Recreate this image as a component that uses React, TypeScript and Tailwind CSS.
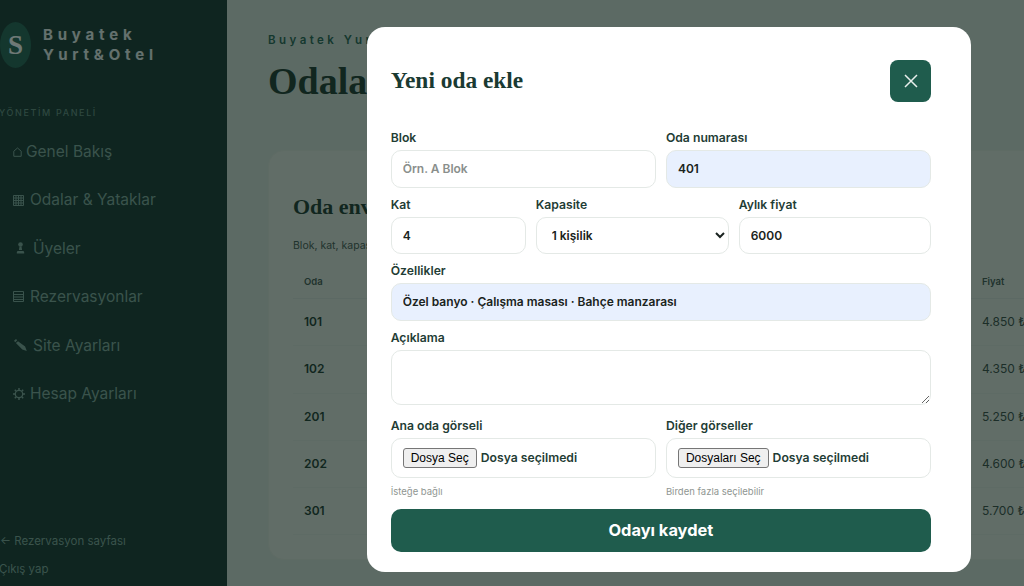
import type { ReactNode } from "react";

const sans = "font-['Inter','Noto_Sans',sans-serif]";
const serif = "font-['Liberation_Serif','DejaVu_Serif',serif]";

const navItems: { icon: ReactNode; slot: string; label: string }[] = [
  {
    slot: "w-[13px]",
    label: "Genel Bakış",
    icon: (
      <svg width="9" height="10" viewBox="0 0 9 10" fill="none" stroke="currentColor" strokeWidth="1">
        <path d="M.8 9.3V4.2L4.5 1l3.7 3.2v5.1z" />
      </svg>
    ),
  },
  {
    slot: "w-[17px]",
    label: "Odalar & Yataklar",
    icon: (
      <svg width="11" height="11" viewBox="0 0 11 11" fill="none" stroke="currentColor" strokeWidth="1">
        <path d="M.5.5h10v10H.5zM3 .5v10M5.500 .5v10M8 .5v10M.5 3h10M.5 5.500h10M.5 8h10" />
      </svg>
    ),
  },
  {
    slot: "w-[20px]",
    label: "Üyeler",
    icon: (
      <svg className="ml-[3px]" width="9" height="12" viewBox="0 0 9 12" fill="currentColor">
        <circle cx="4.500" cy="2.500" r="2.300" />
        <path d="M3.500 4.500h2l.6 3.500H2.900zM1.500 9h6l.7 1.200v1.300H.8v-1.300z" />
      </svg>
    ),
  },
  {
    slot: "w-[17px]",
    label: "Rezervasyonlar",
    icon: (
      <svg width="11" height="11" viewBox="0 0 11 11" fill="none" stroke="currentColor" strokeWidth="1">
        <path d="M.5.5h10v10H.5zM.5 3.500h10M.5 6h10M.5 8.500h10" />
      </svg>
    ),
  },
  {
    slot: "w-[20px]",
    label: "Site Ayarları",
    icon: (
      <svg className="ml-px" width="13" height="12" viewBox="0 0 13 12" fill="currentColor">
        <path d="M2 0L0 1.800l1.200 1.400 2-1.900zM4 2.200L1.900 4.100l6.400 6.300 4.500 1.500-1.700-4.400z" />
      </svg>
    ),
  },
  {
    slot: "w-[17px]",
    label: "Hesap Ayarları",
    icon: (
      <svg width="12" height="12" viewBox="0 0 12 12" fill="none" stroke="currentColor">
        <circle cx="6" cy="6" r="3.700" strokeWidth="1.300" />
        <path strokeWidth="1.500" d="M6 0v2M6 10v2M0 6h2M10 6h2M1.800 1.800l1.400 1.400M8.800 8.800l1.400 1.400M10.200 1.800L8.800 3.200M3.200 8.800l-1.400 1.400" />
      </svg>
    ),
  },
];

const rooms = [
  { no: "101", price: "4.850 ₺" },
  { no: "102", price: "4.350 ₺" },
  { no: "201", price: "5.250 ₺" },
  { no: "202", price: "4.600 ₺" },
  { no: "301", price: "5.700 ₺" },
];

const labelClass = "mb-1 block text-[12.2px] leading-[17px] font-semibold text-[#1f3d35]";
const fieldClass =
  "block h-[37.6px] w-full rounded-[10px] border border-[#e4e9e6] px-[11px] text-[12px] font-semibold text-[#1a2320] outline-none placeholder:text-[#8a8f8c]";

function Sidebar() {
  return (
    <aside className="flex h-full w-[227px] shrink-0 flex-col overflow-hidden bg-[#122d28] pb-[8px] pt-[22px]">
      <div className="flex items-center gap-3">
        <div className={`${serif} flex h-[46px] w-[31px] items-center justify-center rounded-[50%] bg-[#1e5a4b] text-[27px] font-bold text-white`}>
          S
        </div>
        <div className="text-[15px] leading-[20px] font-bold tracking-[0.32em] text-white/90">
          <div>Buyatek</div>
          <div>Yurt&amp;Otel</div>
        </div>
      </div>

      <p className="-ml-px mt-[39px] whitespace-nowrap text-[9px] leading-[12px] font-medium tracking-[0.18em] text-[#5f8478]">
        YÖNETİM PANELİ
      </p>

      <nav className="mt-[8.5px]">
        {navItems.map((item) => (
          <div key={item.label} className="flex h-[48.4px] items-center pl-[13px] text-[15.5px] text-[#7da096]">
            <span className={item.slot}>{item.icon}</span>
            <span>{item.label}</span>
          </div>
        ))}
      </nav>

      <div className="mt-auto space-y-[11px] text-[11.5px] leading-[17px] text-[#7da096]">
        <p className="whitespace-nowrap">← Rezervasyon sayfası</p>
        <p className="-ml-px whitespace-nowrap">Çıkış yap</p>
      </div>
    </aside>
  );
}

function RoomTable() {
  return (
    <section className="mt-[39px] h-[410px] w-[800px] rounded-[16px] border border-[#d8dbd3] bg-[#dfe1d9] px-6 pt-[41px]">
      <h2 className={`${serif} text-[22px] leading-[30px] font-bold text-[#173127]`}>Oda envanteri</h2>
      <p className="mt-[17px] text-[10.5px] leading-[14px] text-[#3d4f49]">Blok, kat, kapasite ve fiyat bilgileri</p>

      <div className="mt-[14px]">
        <div className="grid h-[32px] grid-cols-[678px_1fr] items-center border-b border-[#d3d8d1] pl-[11px] text-[9.5px] font-semibold text-[#3d4f49]">
          <span>Oda</span>
          <span>Fiyat</span>
        </div>
        {rooms.map((room) => (
          <div
            key={room.no}
            className="grid h-[47.3px] grid-cols-[678px_1fr] items-center border-b border-[#d8dcd5] pl-[11px] text-[12px]"
          >
            <span className="font-semibold text-[#173127]">{room.no}</span>
            <span className="whitespace-nowrap text-[#33443e]">{room.price}</span>
          </div>
        ))}
      </div>
    </section>
  );
}

function FileField({ label, button, hint }: { label: string; button: string; hint: string }) {
  return (
    <div>
      <span className={labelClass}>{label}</span>
      <div className="flex h-[39.6px] items-center gap-1 rounded-[10px] border border-[#e4e9e6] bg-white pl-[11px]">
        <span className="rounded-[3px] border border-[#767676] bg-[#efefef] px-[7px] font-['Liberation_Sans',sans-serif] text-[12px] leading-[18px] text-black">
          {button}
        </span>
        <span className="text-[12.2px] font-semibold text-[#1f3d35]">Dosya seçilmedi</span>
      </div>
      <p className="mt-[7px] text-[9.5px] leading-[13px] text-[#8f9692]">{hint}</p>
    </div>
  );
}

function RoomModal() {
  return (
    <div className="h-[545px] w-[604px] rounded-[18px] bg-white pl-6 pr-[39.6px] pt-[32px]">
      <div className="flex h-[43px] items-center justify-between">
        <h2 className={`${serif} pt-px text-[23.4px] font-bold text-[#1a3a32]`}>Yeni oda ekle</h2>
        <button className="flex h-[42px] w-[41px] items-center justify-center rounded-[8px] bg-[#1f5c4d]">
          <svg width="14" height="14" viewBox="0 0 14 14" fill="none" stroke="#e8efec" strokeWidth="1.5">
            <path d="M1 1l12 12M13 1L1 13" />
          </svg>
        </button>
      </div>

      <form className="mt-[27px] flex flex-col gap-2">
        <div className="grid grid-cols-2 gap-x-[10px]">
          <div>
            <label className={labelClass}>Blok</label>
            <input className={`${fieldClass} bg-white`} placeholder="Örn. A Blok" />
          </div>
          <div>
            <label className={labelClass}>Oda numarası</label>
            <input className={`${fieldClass} bg-[#e8f0fe]`} defaultValue="401" />
          </div>
        </div>

        <div className="grid grid-cols-[135px_193px_1fr] gap-x-[10px]">
          <div>
            <label className={labelClass}>Kat</label>
            <input className={`${fieldClass} bg-white`} defaultValue="4" />
          </div>
          <div>
            <label className={labelClass}>Kapasite</label>
            <select className={`${fieldClass} bg-white`} defaultValue="1">
              <option value="1">1 kişilik</option>
            </select>
          </div>
          <div>
            <label className={labelClass}>Aylık fiyat</label>
            <input className={`${fieldClass} bg-white`} defaultValue="6000" />
          </div>
        </div>

        <div>
          <label className={labelClass}>Özellikler</label>
          <input className={`${fieldClass} bg-[#e8f0fe]`} defaultValue="Özel banyo · Çalışma masası · Bahçe manzarası" />
        </div>

        <div>
          <label className={labelClass}>Açıklama</label>
          <textarea className="block h-[55.4px] w-full rounded-[10px] border border-[#e4e9e6] bg-white px-[11px] py-2 text-[12px] outline-none" />
        </div>

        <div className="mt-1 grid grid-cols-2 gap-x-[10px]">
          <FileField label="Ana oda görseli" button="Dosya Seç" hint="İsteğe bağlı" />
          <FileField label="Diğer görseller" button="Dosyaları Seç" hint="Birden fazla seçilebilir" />
        </div>

        <button type="button" className="mt-[3px] h-[43px] rounded-[10px] bg-[#1f5c4d] text-[16.4px] font-bold text-white">
          Odayı kaydet
        </button>
      </form>
    </div>
  );
}

export default function App() {
  return (
    <div className={`${sans} relative flex h-[586px] w-[1024px] overflow-hidden bg-[#d2d9d2]`}>
      <Sidebar />

      <main className="min-w-0 flex-1 pl-[41px] pt-[33px]">
        <p className="whitespace-nowrap text-[11.5px] leading-[15px] font-semibold tracking-[0.3em] text-[#1f5c4d]">
          Buyatek Yurt&amp;Otel
        </p>
        <h1 className={`${serif} mt-[3px] text-[38px] leading-[60px] font-bold text-[#173127]`}>Odalar</h1>
        <RoomTable />
      </main>

      <div className="absolute inset-0 bg-[#0d201b]/60 pl-[366.7px] pt-[27px]">
        <RoomModal />
      </div>
    </div>
  );
}
